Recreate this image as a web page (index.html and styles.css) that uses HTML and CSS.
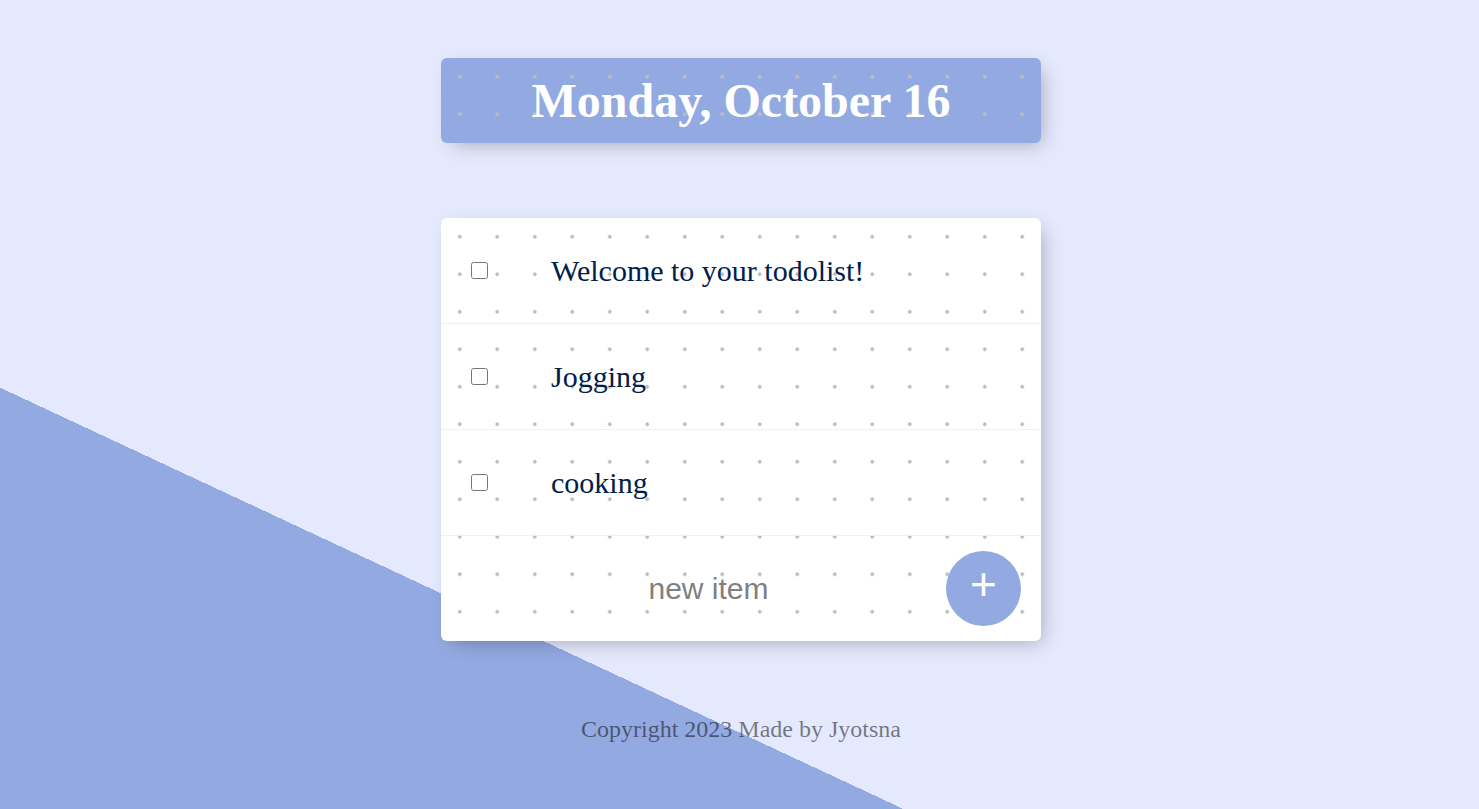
FILE: index.html
```html
<!DOCTYPE html>
<html lang="en">
<head>
<meta charset="utf-8">
<title>To-Do List</title>
<link rel="stylesheet" href="styles.css">
</head>
<body>
  <div class="box heading">
    <h1>Monday, October 16</h1>
  </div>

  <div class="box list">
    <form class="item">
      <input type="checkbox" class="check">
      <p>Welcome to your todolist!</p>
    </form>
    <form class="item">
      <input type="checkbox" class="check">
      <p>Jogging</p>
    </form>
    <form class="item">
      <input type="checkbox" class="check">
      <p>cooking</p>
    </form>
    <form class="item add">
      <input type="text" class="new-item" placeholder="new item" autocomplete="off">
      <button type="button" class="add-btn">+</button>
    </form>
  </div>

  <footer class="footer">Copyright 2023 Made by Jyotsna</footer>
</body>
</html>
```

FILE: styles.css
```css
html {
  background-color: #E4E9FD;
  background-image: linear-gradient(25deg, #93A9E1 50%, #E4E9FD 50%);
  background-size: 100% 1465px;
  background-repeat: no-repeat;
}

body {
  margin: 0;
  padding: 58px 0 0 3px;
  font-family: "Liberation Serif", "Times New Roman", serif;
}

.box {
  width: 600px;
  margin: 0 auto;
  border-radius: 6px;
  box-shadow: 6px 6px 19px -6px rgba(0, 0, 0, 0.3);
  background-image: radial-gradient(circle at center, #bdbdbd 1.5px, rgba(189, 189, 189, 0) 2.1px);
  background-size: 37.5px 37.5px;
}

.heading {
  background-color: #93A9E1;
  text-align: center;
}

.heading h1 {
  margin: 0;
  padding: 15px 0;
  height: 55px;
  line-height: 55px;
  font-size: 48px;
  font-weight: bold;
  color: #fff;
}

.list {
  margin-top: 75px;
  background-color: #fff;
}

.item {
  height: 105px;
  display: flex;
  align-items: center;
  border-bottom: 1px solid #F1F1F1;
  margin: 0;
}

.item:last-child {
  border-bottom: 0;
}

.check {
  width: 17px;
  height: 17px;
  margin: 0 0 0 30px;
}

.item p {
  margin: 0 0 0 63px;
  font-size: 30px;
  color: #00204a;
}

.new-item {
  flex: 1;
  margin: 0 0 0 30px;
  padding: 0;
  height: 75px;
  border: none;
  background: transparent;
  text-align: center;
  font-family: "Liberation Sans", Arial, sans-serif;
  font-size: 30px;
  color: #333;
}

.new-item::placeholder {
  color: grey;
  opacity: 1;
}

.new-item:focus {
  outline: none;
}

.add-btn {
  width: 75px;
  height: 75px;
  margin-right: 20px;
  padding: 0 0 9px 0;
  border: 0;
  border-radius: 50%;
  background-color: #93A9E1;
  color: #fff;
  font-family: "Liberation Sans", Arial, sans-serif;
  font-size: 46px;
  line-height: 1;
}

.footer {
  margin-top: 75px;
  text-align: center;
  font-size: 24px;
  color: rgba(0, 0, 0, 0.5);
}
```
